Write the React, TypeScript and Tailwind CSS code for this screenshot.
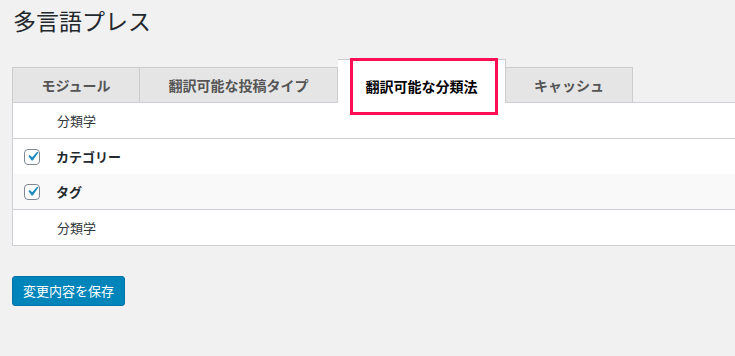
const tabs = [
  { label: "モジュール", w: "w-[128px] border-l" },
  { label: "翻訳可能な投稿タイプ", w: "w-[198px]" },
];

// checkbox with the WordPress style filled tick
const CheckBox = () => (
  <span className="flex h-4 w-4 items-center justify-center rounded-[4px] border border-[#7e8993] bg-white">
    <svg viewBox="0 0 20 20" className="h-[19px] w-[19px] shrink-0 fill-[#1e8cbe]">
      <path d="M14.83 4.89l1.34.94-5.81 8.38H9.02L5.78 9.67l1.34-1.25 2.57 2.4z" />
    </svg>
  </span>
);

const App = () => {
  return (
    <div className="h-[356px] w-[735px] overflow-hidden bg-[#f1f1f1] font-['Noto_Sans_CJK_JP',sans-serif] text-[#23282d]">
      <h1 className="pl-[13px] pt-[6px] text-[23px] leading-[29px] font-normal">
        多言語プレス
      </h1>

      <div className="pl-[12px] pt-[23px]">
        {/* tabs */}
        <div className="flex h-[44px] items-end">
          {tabs.map((t) => (
            <div
              key={t.label}
              className={`${t.w} flex h-[35px] items-center justify-center border-t border-r border-[#ccc] bg-[#e5e5e5] text-[14px] font-bold text-[#555]`}>
              {t.label}
            </div>
          ))}
          <div className="relative z-10 -mb-px flex h-[44px] w-[168px] items-center justify-center border-t border-r border-[#ccc] bg-white pt-[9px] text-[14px] font-bold text-black">
            翻訳可能な分類法
            <div className="absolute -top-[2px] left-[12px] z-20 h-[57px] w-[148px] border-[3px] border-[#fc0f55]" />
          </div>
          <div className="flex h-[35px] w-[127px] items-center justify-center border-t border-r border-[#ccc] bg-[#e5e5e5] text-[14px] font-bold text-[#555]">
            キャッシュ
          </div>
        </div>

        {/* table */}
        <div className="w-[740px] border border-[#ccd0d4] bg-white text-[13px]">
          <div className="flex h-[36px] items-center border-b border-[#ccd0d4] pl-[44px] text-[#32373c]">
            分類学
          </div>
          <div className="flex h-[35px] items-center gap-[16px] pl-[11px] font-semibold">
            <CheckBox />
            カテゴリー
          </div>
          <div className="flex h-[36px] items-center gap-[16px] border-b border-[#ccd0d4] bg-[#f9f9f9] pl-[11px] font-semibold">
            <CheckBox />
            タグ
          </div>
          <div className="flex h-[35px] items-center pl-[44px] text-[#32373c]">
            分類学
          </div>
        </div>

        <button className="mt-[30px] h-[30px] rounded-[3px] border border-[#0073aa] bg-[#0085ba] px-[10px] text-[13px] text-white">
          変更内容を保存
        </button>
      </div>
    </div>
  );
};

export default App;
